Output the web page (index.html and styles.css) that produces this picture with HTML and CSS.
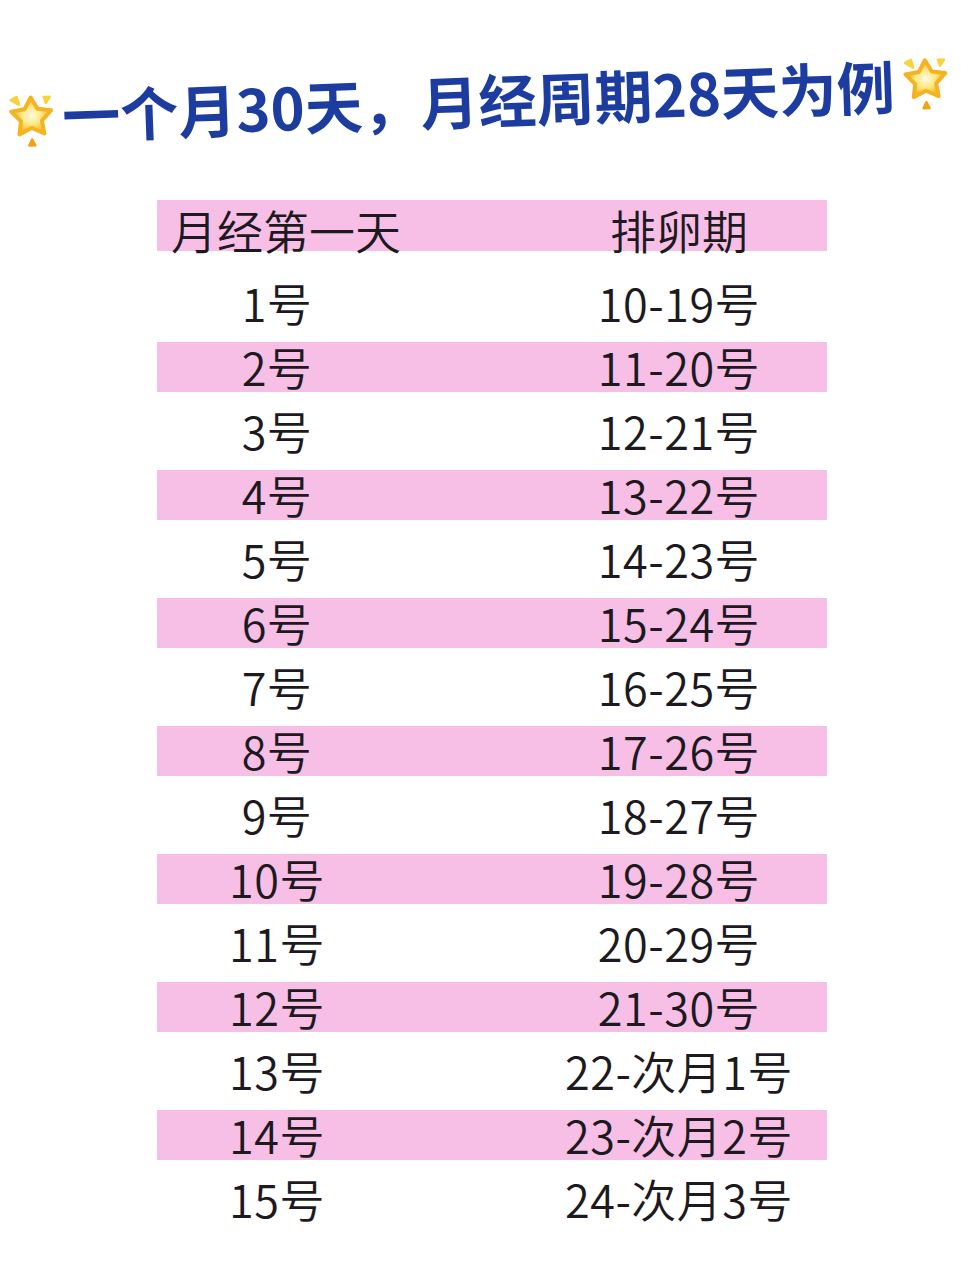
FILE: index.html
```html
<!DOCTYPE html>
<html lang="zh-CN">
<head>
<meta charset="utf-8">
<title>排卵期对照表</title>
<link rel="stylesheet" href="styles.css">
</head>
<body>
<div class="page">
  <h1 class="title">
    <svg class="star star-left" viewBox="0 0 48 56" width="48" height="56" aria-hidden="true">
      <defs>
        <radialGradient id="gl" cx="50%" cy="50%" r="55%">
          <stop offset="0" stop-color="#fffbe6"/>
          <stop offset="0.45" stop-color="#fde880"/>
          <stop offset="1" stop-color="#f1a512"/>
        </radialGradient>
      </defs>
      <path d="M4 6 L10 3 L12 11 Z" fill="#f8d33c" stroke="#f8d33c" stroke-width="2.5" stroke-linejoin="round"/>
      <path d="M37 4 L43 4 L39 10 Z" fill="#f8d33c" stroke="#f8d33c" stroke-width="2.5" stroke-linejoin="round"/>
      <path d="M24 46 L27 52 L21 52 Z" fill="#f0a414" stroke="#f0a414" stroke-width="2.5" stroke-linejoin="round"/>
      <path d="M24 4 L30.5 15.5 L44 17.5 L34.5 27.5 L36.5 40.5 L24 34.5 L11.5 40.5 L13.5 27.5 L4 17.5 L17.5 15.5 Z" fill="url(#gl)" stroke="#f4b422" stroke-width="4" stroke-linejoin="round"/>
    </svg>
    <span class="title-text">一个月30天，月经周期28天为例</span>
    <svg class="star star-right" viewBox="0 0 48 56" width="48" height="56" aria-hidden="true">
      <defs>
        <radialGradient id="gr" cx="50%" cy="50%" r="55%">
          <stop offset="0" stop-color="#fffbe6"/>
          <stop offset="0.45" stop-color="#fde880"/>
          <stop offset="1" stop-color="#f1a512"/>
        </radialGradient>
      </defs>
      <path d="M4 6 L10 3 L12 11 Z" fill="#f8d33c" stroke="#f8d33c" stroke-width="2.5" stroke-linejoin="round"/>
      <path d="M37 4 L43 4 L39 10 Z" fill="#f8d33c" stroke="#f8d33c" stroke-width="2.5" stroke-linejoin="round"/>
      <path d="M24 46 L27 52 L21 52 Z" fill="#f0a414" stroke="#f0a414" stroke-width="2.5" stroke-linejoin="round"/>
      <path d="M24 4 L30.5 15.5 L44 17.5 L34.5 27.5 L36.5 40.5 L24 34.5 L11.5 40.5 L13.5 27.5 L4 17.5 L17.5 15.5 Z" fill="url(#gr)" stroke="#f4b422" stroke-width="4" stroke-linejoin="round"/>
    </svg>
  </h1>

  <div class="table">
    <div class="row head">
      <span class="cell c1">月经第一天</span>
      <span class="cell c2">排卵期</span>
    </div>
    <div class="body">
      <div class="row"><span class="cell">1号</span><span class="cell">10-19号</span></div>
      <div class="row"><span class="cell">2号</span><span class="cell">11-20号</span></div>
      <div class="row"><span class="cell">3号</span><span class="cell">12-21号</span></div>
      <div class="row"><span class="cell">4号</span><span class="cell">13-22号</span></div>
      <div class="row"><span class="cell">5号</span><span class="cell">14-23号</span></div>
      <div class="row"><span class="cell">6号</span><span class="cell">15-24号</span></div>
      <div class="row"><span class="cell">7号</span><span class="cell">16-25号</span></div>
      <div class="row"><span class="cell">8号</span><span class="cell">17-26号</span></div>
      <div class="row"><span class="cell">9号</span><span class="cell">18-27号</span></div>
      <div class="row"><span class="cell">10号</span><span class="cell">19-28号</span></div>
      <div class="row"><span class="cell">11号</span><span class="cell">20-29号</span></div>
      <div class="row"><span class="cell">12号</span><span class="cell">21-30号</span></div>
      <div class="row"><span class="cell">13号</span><span class="cell">22-次月1号</span></div>
      <div class="row"><span class="cell">14号</span><span class="cell">23-次月2号</span></div>
      <div class="row"><span class="cell">15号</span><span class="cell">24-次月3号</span></div>
    </div>
  </div>
</div>
</body>
</html>
```

FILE: styles.css
```css
html, body {
  margin: 0;
  padding: 0;
  background: #ffffff;
}

.page {
  width: 961px;
  height: 1280px;
  overflow: hidden;
  font-family: "Noto Sans CJK SC", "Noto Sans", sans-serif;
}

.title {
  margin: 70px 0 0 0;
  padding-left: 7px;
  width: 941px;
  display: flex;
  align-items: center;
  gap: 7px;
  transform: rotate(-2deg);
  transform-origin: 50% 50%;
}

.title-text {
  font-size: 58px;
  line-height: 59px;
  font-weight: 700;
  color: #1d3c9f;
  white-space: nowrap;
  letter-spacing: 0;
}

.star {
  flex: none;
  display: block;
}

.star-left {
  transform: translateY(6px);
}

.table {
  margin: 71px 0 0 157px;
  width: 670px;
}

.row {
  display: grid;
  grid-template-columns: 240px 240px;
  column-gap: 162px;
  height: 50px;
  align-items: center;
  color: #1c1a1e;
  font-size: 45px;
  line-height: 50px;
  font-weight: 350;
  letter-spacing: 0.5px;
}

.cell {
  text-align: center;
  white-space: nowrap;
}

.head {
  background: #f7bfe6;
  height: 51px;
  font-size: 46px;
  letter-spacing: 0;
  padding-top: 4px;
  box-sizing: border-box;
  margin-bottom: 27px;
}

.head .c1 {
  padding-left: 14px;
}

.body {
  display: flex;
  flex-direction: column;
  gap: 14px;
}

.body .row:nth-child(even) {
  background: #f7bfe6;
}
```
